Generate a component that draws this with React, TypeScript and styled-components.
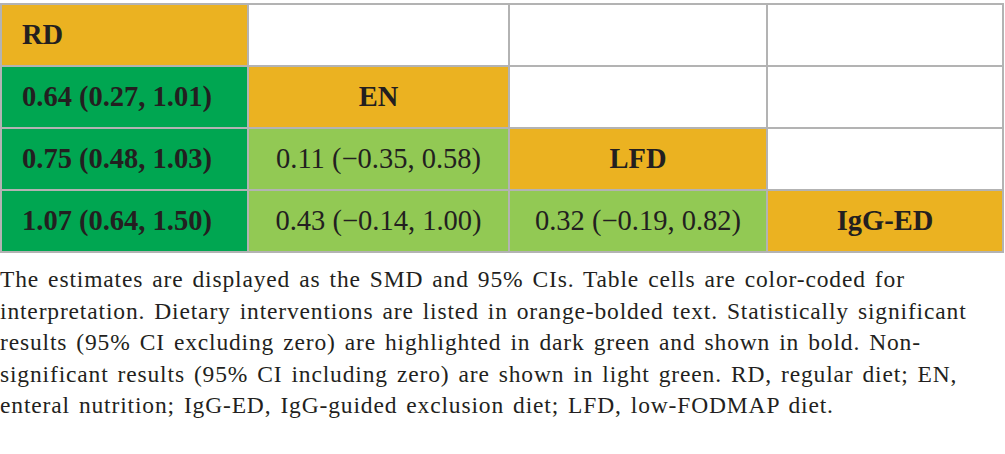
import styled, { createGlobalStyle } from 'styled-components';

type Kind = 'diet' | 'sig' | 'ns' | 'empty';

interface CellData {
  kind: Kind;
  text?: string;
}

const ROWS: CellData[][] = [
  [{ kind: 'diet', text: 'RD' }, { kind: 'empty' }, { kind: 'empty' }, { kind: 'empty' }],
  [
    { kind: 'sig', text: '0.64 (0.27, 1.01)' },
    { kind: 'diet', text: 'EN' },
    { kind: 'empty' },
    { kind: 'empty' },
  ],
  [
    { kind: 'sig', text: '0.75 (0.48, 1.03)' },
    { kind: 'ns', text: '0.11 (\u22120.35, 0.58)' },
    { kind: 'diet', text: 'LFD' },
    { kind: 'empty' },
  ],
  [
    { kind: 'sig', text: '1.07 (0.64, 1.50)' },
    { kind: 'ns', text: '0.43 (\u22120.14, 1.00)' },
    { kind: 'ns', text: '0.32 (\u22120.19, 0.82)' },
    { kind: 'diet', text: 'IgG-ED' },
  ],
];

const FILL: Record<Kind, string> = {
  diet: '#ebb221',
  sig: '#00a651',
  ns: '#92c954',
  empty: '#ffffff',
};

export default function App() {
  return (
    <>
      <GlobalStyle />
      <Figure>
        <Matrix>
          {ROWS.map((row, r) =>
            row.map((cell, c) => (
              <Cell key={`${r}-${c}`} $kind={cell.kind} $first={c === 0}>
                {cell.text}
              </Cell>
            )),
          )}
        </Matrix>
        <Caption>
          The estimates are displayed as the SMD and 95% CIs. Table cells are color-coded for
          interpretation. Dietary interventions are listed in orange-bolded text. Statistically
          significant results (95% CI excluding zero) are highlighted in dark green and shown in
          bold. Non-significant results (95% CI including zero) are shown in light green. RD,
          regular diet; EN, enteral nutrition; IgG-ED, IgG-guided exclusion diet; LFD, low-FODMAP
          diet.
        </Caption>
      </Figure>
    </>
  );
}

const GlobalStyle = createGlobalStyle`
  body {
    margin: 0;
    background: #ffffff;
    font-family: 'Liberation Serif', 'DejaVu Serif', serif;
    color: #231f20;
  }
`;

const Figure = styled.div`
  width: 1005px;
  padding-top: 3px;
`;

const Matrix = styled.div`
  display: grid;
  grid-template-columns: 245px 259px 256px 234px;
  grid-auto-rows: 60px;
  gap: 2px;
  width: 1004px;
  box-sizing: border-box;
  padding: 2px;
  background: #b3b3b3;
`;

const Cell = styled.div<{ $kind: Kind; $first: boolean }>`
  display: flex;
  align-items: center;
  justify-content: ${(p) => (p.$first ? 'flex-start' : 'center')};
  padding: ${(p) => (p.$first ? '0 0 0 20px' : '0')};
  background: ${(p) => FILL[p.$kind]};
  font-size: 28.5px;
  font-weight: ${(p) => (p.$kind === 'ns' ? 400 : 700)};
  color: #231f20;
  white-space: nowrap;
`;

const Caption = styled.p`
  margin: 11px 0 0;
  width: 1003px;
  font-size: 23.5px;
  line-height: 31.6px;
  letter-spacing: 0.85px;
  word-spacing: 2.3px;
`;
